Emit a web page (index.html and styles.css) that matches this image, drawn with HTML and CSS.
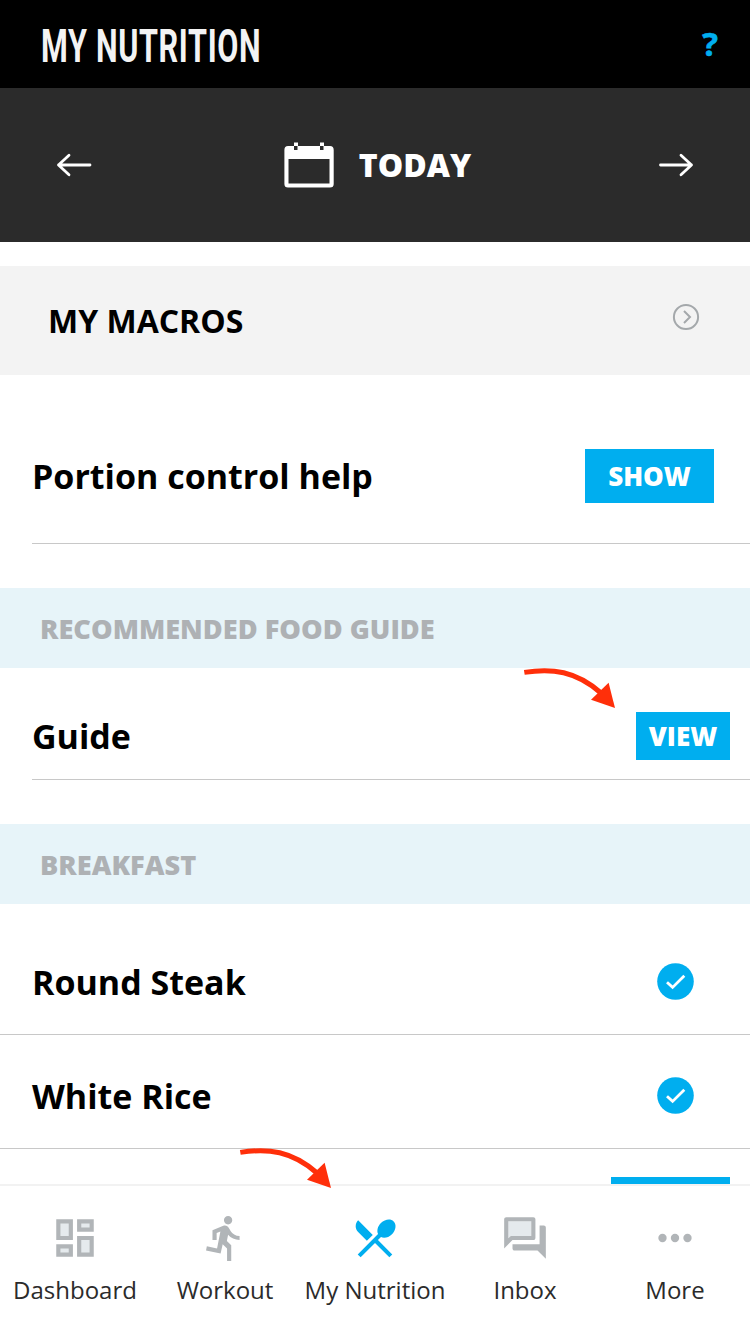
FILE: index.html
```html
<!DOCTYPE html>
<html lang="en">
<head>
<meta charset="utf-8">
<title>My Nutrition</title>
<link rel="stylesheet" href="styles.css">
</head>
<body>
<div class="app">
  <header class="topbar">
    <h1 class="title">MY NUTRITION</h1>
    <span class="help">?</span>
  </header>
  <div class="datebar">
    <svg class="arrow" viewBox="0 0 36 24"><path d="M34 12H2.500M13 2.200L2.500 12L13 21.800"/></svg>
    <div class="day">
      <svg class="calendar" viewBox="0 0 50 46">
        <path class="solid" fill-rule="evenodd" d="M4 4H10V8H13.500V4H36V8H39.500V4H46Q49.700 4 49.700 8V42Q49.700 45.500 46 45.500H4Q.4 45.500 .4 42V8Q.4 4 4 4ZM4.500 17V41.500H45.500V17Z"/>
        <path class="solid" d="M10 .5h4V4h-4zM36 .5h4V4h-4z"/>
      </svg>
      <span class="day-label">TODAY</span>
    </div>
    <svg class="arrow" viewBox="0 0 36 24"><path d="M2.500 12H33.500M23 2.200L33.500 12L23 21.800"/></svg>
  </div>
  <main class="content">
    <section class="macros">
      <span class="macros-label">MY MACROS</span>
      <svg class="go" viewBox="0 0 28 28"><circle cx="14" cy="14" r="12.100"/><path d="M12 8l6 6-6 6"/></svg>
    </section>
    <div class="row portion">
      <span class="name">Portion control help</span>
      <span class="button show">SHOW</span>
    </div>
    <h2 class="band">RECOMMENDED FOOD GUIDE</h2>
    <div class="row guide">
      <span class="name">Guide</span>
      <span class="button view">VIEW</span>
    </div>
    <h2 class="band">BREAKFAST</h2>
    <div class="food first">
      <span class="name">Round Steak</span>
      <svg class="check" viewBox="0 0 37 37"><circle cx="18.500" cy="18.500" r="18.300"/><path d="M10 19.200L15.600 24.400L27.300 12.700"/></svg>
    </div>
    <div class="food">
      <span class="name">White Rice</span>
      <svg class="check" viewBox="0 0 37 37"><circle cx="18.500" cy="18.500" r="18.300"/><path d="M10 19.200L15.600 24.400L27.300 12.700"/></svg>
    </div>
    <div class="food-action"><span class="button next"></span></div>
  </main>
  <nav class="tabs">
    <div class="tab">
      <svg class="icon" viewBox="0 0 24 24"><path class="pale" d="M4 4h6v8H4zM14 4h6v4h-6zM4 16h6v4H4zM14 12h6v8h-6z"/><path fill-rule="evenodd" d="M3 3h8v10H3zM5 5v6h4V5zM13 3h8v6h-8zM15 5v2h4V5zM3 15h8v6H3zM5 17v2h4v-2zM13 11h8v10h-8zM15 13v6h4v-6z"/></svg>
      <span class="tab-label">Dashboard</span>
    </div>
    <div class="tab">
      <svg class="icon" viewBox="0 0 24 24"><path d="M13.490 5.480c1.100 0 2-.9 2-2s-.9-2-2-2-2 .9-2 2 .9 2 2 2zm-3.600 13.900l1-4.400 2.100 2v6h2v-7.500l-2.100-2 .6-3c1.300 1.500 3.300 2.500 5.500 2.500v-2c-1.900 0-3.500-1-4.300-2.400l-1-1.600c-.4-.6-1-1-1.700-1-.3 0-.5.1-.8.1l-5.200 2.200v4.700h2v-3.400l1.800-.7-1.600 8.100-4.900-1-.4 2 7 1.400z"/></svg>
      <span class="tab-label">Workout</span>
    </div>
    <div class="tab">
      <svg class="icon active" viewBox="0 0 24 24"><path d="M8.100 13.340l2.830-2.830L3.910 3.500c-1.560 1.560-1.560 4.090 0 5.660l4.190 4.180zm6.780-1.810c1.530.71 3.680.21 5.270-1.380 1.910-1.910 2.280-4.650.81-6.120-1.460-1.460-4.200-1.100-6.120.81-1.590 1.590-2.090 3.740-1.380 5.270L3.700 19.870l1.410 1.410L12 14.410l6.880 6.880 1.410-1.410L13.410 13l1.470-1.470z"/></svg>
      <span class="tab-label">My Nutrition</span>
    </div>
    <div class="tab">
      <svg class="icon" viewBox="0 0 24 24"><path class="pale" d="M15 4v7H5.170L4 12.170V4z"/><path d="M15 4v7H5.170L4 12.170V4h11m1-2H3c-.55 0-1 .45-1 1v14l4-4h10c.55 0 1-.45 1-1V3c0-.55-.45-1-1-1zm5 4h-2v9H6v2c0 .55.45 1 1 1h11l4 4V7c0-.55-.45-1-1-1z"/></svg>
      <span class="tab-label">Inbox</span>
    </div>
    <div class="tab">
      <svg class="icon" viewBox="0 0 24 24"><circle cx="6" cy="12" r="2"/><circle cx="12" cy="12" r="2"/><circle cx="18" cy="12" r="2"/></svg>
      <span class="tab-label">More</span>
    </div>
  </nav>
  <svg class="pointer to-view" viewBox="0 0 94 42"><path class="curve" d="M2.300 6.400C30 2 54 5 79 27"/><path d="M93 42L86.600 16.800L69 33.700Z"/></svg>
  <svg class="pointer to-tab" viewBox="0 0 94 42"><path class="curve" d="M2.300 6.400C30 2 54 5 79 27"/><path d="M93 42L86.600 16.800L69 33.700Z"/></svg>
</div>
</body>
</html>
```

FILE: styles.css
```css
* { box-sizing: border-box; }
body { margin: 0; font-family: "Open Sans", "Noto Sans", sans-serif; background: #fff; }
svg { display: block; flex: none; }
span, h1 { white-space: nowrap; }
.app { position: relative; width: 750px; height: 1334px; display: flex; flex-direction: column; overflow: hidden; }

.topbar { height: 88px; flex: none; background: #000; display: flex; align-items: center; justify-content: space-between; padding: 2px 32px 0 41px; }
.title { margin: 2px 0 0; color: #f3f3f3; font-family: Roboto, sans-serif; font-weight: 700; font-size: 46px; line-height: 60px; letter-spacing: 1px; transform: scaleX(.665); transform-origin: left; }
.help { margin-bottom: 2px; color: #00aeef; font-size: 33px; font-weight: 700; line-height: 40px; -webkit-text-stroke: .6px #00aeef; }

.datebar { height: 154px; flex: none; background: #2b2b2b; display: flex; align-items: center; justify-content: space-between; padding: 0 56px; }
.arrow { width: 36px; height: 24px; fill: none; stroke: #fff; stroke-width: 2.8; stroke-linecap: round; stroke-linejoin: round; }
.day { display: flex; align-items: center; gap: 25px; padding-left: 5px; }
.calendar { width: 50px; height: 46px; }
.solid { fill: #fff; }
.day-label { color: #fff; font-weight: 800; font-size: 32px; line-height: 44px; }

.content { flex: 1; min-height: 0; overflow: hidden; padding-top: 24px; display: flex; flex-direction: column; }
.content > * { flex: none; }
.macros { height: 109px; background: #f3f3f3; display: flex; align-items: center; justify-content: space-between; padding: 0 50px 0 48px; }
.macros-label { font-weight: 700; font-size: 32px; line-height: 44px; }
.go { width: 28px; height: 28px; margin-bottom: 7px; fill: none; stroke: #a4a8ab; stroke-width: 2; }
.row { margin-left: 32px; border-bottom: 1px solid #c8c8c8; display: flex; align-items: center; justify-content: space-between; }
.name { color: #000; font-weight: 700; font-size: 34px; line-height: 46px; }
.portion { height: 169px; padding: 34px 36px 0 0; }
.button { background: #00aeef; color: #fff; font-weight: 800; font-size: 26px; display: flex; align-items: center; justify-content: center; }
.show { width: 129px; height: 54px; }
.band { margin: 44px 0 0; height: 80px; background: #e7f4f9; color: #aeb1b4; font-size: 27.2px; font-weight: 800; display: flex; align-items: center; padding: 1px 0 0 40px; }
.guide { height: 112px; padding: 25px 20px 0 0; }
.view { width: 94px; height: 48px; }
.food { height: 114px; border-bottom: 1px solid #c8c8c8; display: flex; align-items: center; justify-content: space-between; padding: 8px 56px 0 32px; }
.first { height: 131px; padding-top: 25px; }
.check { width: 37px; height: 37px; fill: #00aeef; }
.check path { fill: none; stroke: #fff; stroke-width: 2.8; }
.food-action { padding: 28px 20px 0; display: flex; justify-content: flex-end; }
.next { width: 119px; height: 54px; }

.tabs { height: 150px; flex: none; border-top: 2px solid #f2f2f2; background: #fff; display: grid; grid-template-columns: repeat(5, 1fr); }
.tab { display: flex; flex-direction: column; align-items: center; padding-top: 27px; }
.icon { width: 50px; height: 50px; fill: #b1b5b8; }
.active { fill: #00aeef; }
.pale { fill: #e5eaed; }
.tab-label { margin-top: 11px; color: #2b2b2b; font-size: 24px; line-height: 32px; }

.pointer { position: absolute; width: 94px; height: 42px; fill: #ff2f0a; }
.curve { fill: none; stroke: #ff2f0a; stroke-width: 5; }
.to-view { left: 522px; top: 666px; }
.to-tab { left: 238px; top: 1146px; }
```
